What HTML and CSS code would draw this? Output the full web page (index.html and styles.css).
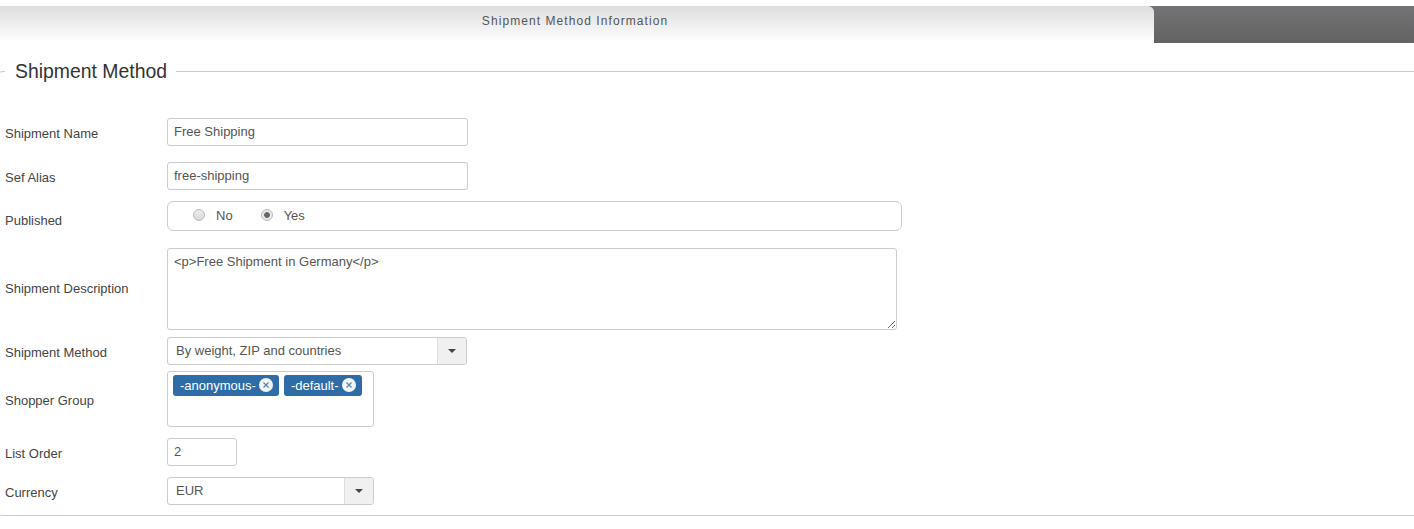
FILE: index.html
```html
<!DOCTYPE html>
<html lang="en">
<head>
<meta charset="utf-8">
<title>Shipment Method Information</title>
<link rel="stylesheet" href="styles.css">
</head>
<body>
<div class="tabbar">
  <div class="tab">Shipment Method Information</div>
</div>
<fieldset class="panel">
  <legend class="panel-title">Shipment Method</legend>
  <div class="row row-name">
    <label class="label">Shipment Name</label>
    <input class="field field-300" type="text" value="Free Shipping">
  </div>
  <div class="row row-alias">
    <label class="label">Sef Alias</label>
    <input class="field field-300" type="text" value="free-shipping">
  </div>
  <div class="row row-published">
    <label class="label label-low">Published</label>
    <div class="radios">
      <span class="radio"></span><span class="radio-text">No</span>
      <span class="radio radio-on"></span><span class="radio-text">Yes</span>
    </div>
  </div>
  <div class="row row-desc">
    <label class="label label-high">Shipment Description</label>
    <textarea class="area">&lt;p&gt;Free Shipment in Germany&lt;/p&gt;</textarea>
  </div>
  <div class="row row-method">
    <label class="label">Shipment Method</label>
    <div class="select select-300">
      <span class="select-value">By weight, ZIP and countries</span>
      <span class="select-toggle"><span class="caret"></span></span>
    </div>
  </div>
  <div class="row row-group">
    <label class="label">Shopper Group</label>
    <div class="tags">
      <span class="tag">-anonymous-<svg class="tag-x" viewBox="0 0 14 14"><circle cx="7" cy="7" r="7" fill="#f2f5f8"/><path d="M4.5 4.5l5 5M9.5 4.5l-5 5" stroke="#5f86ab" stroke-width="1.3" fill="none"/></svg></span>
      <span class="tag">-default-<svg class="tag-x" viewBox="0 0 14 14"><circle cx="7" cy="7" r="7" fill="#f2f5f8"/><path d="M4.5 4.5l5 5M9.5 4.5l-5 5" stroke="#5f86ab" stroke-width="1.3" fill="none"/></svg></span>
    </div>
  </div>
  <div class="row row-order">
    <label class="label">List Order</label>
    <input class="field field-70" type="text" value="2">
  </div>
  <div class="row row-currency">
    <label class="label">Currency</label>
    <div class="select select-207">
      <span class="select-value">EUR</span>
      <span class="select-toggle"><span class="caret"></span></span>
    </div>
  </div>
</fieldset>
</body>
</html>
```

FILE: styles.css
```css
* { box-sizing: border-box; }
html, body { margin: 0; padding: 0; height: 529px; overflow: hidden; background: #fff; }
body {
  padding-top: 6px;
  font-family: "Liberation Sans", Arial, sans-serif;
  font-size: 13px;
  color: #333;
}
.tabbar {
  height: 37px;
  background: linear-gradient(#747477, #626262);
}
.tab {
  width: 1154px;
  height: 36px;
  padding-top: 8px;
  padding-right: 4px;
  border-top-right-radius: 6px;
  background: linear-gradient(#dedede, #f6f6f6 75%, #fff);
  box-shadow: 0 1px 0 #fff;
  text-align: center;
  font-size: 12px;
  letter-spacing: 1.07px;
  color: #555;
}
.panel {
  margin: 14px -10px 0 -5px;
  padding: 0 0 9px 9px;
  height: 459px;
  border: 1px solid #ccc;
  border-radius: 8px;
  min-width: 0;
}
.panel-title {
  margin-left: 0;
  padding: 0 9px 0 10px;
  font-size: 19.4px;
  line-height: 28px;
  color: #333;
}
.row { display: flex; align-items: center; }
.label { width: 162px; padding-top: 2px; font-size: 13px; color: #444; }
.label-low { padding-top: 9px; }
.label-high { padding-top: 0; margin-top: -2px; }
.row-name { margin-top: 33px; }
.row-alias { margin-top: 16px; }
.row-published { margin-top: 11px; }
.row-desc { margin-top: 17px; }
.row-method { margin-top: 7px; }
.row-group { margin-top: 6px; }
.row-order { margin-top: 11px; }
.row-currency { margin-top: 11px; }
.field, .area, .select, .tags, .radios {
  border: 1px solid #ccc;
  border-radius: 3px;
  background: #fff;
  font-family: inherit;
  font-size: 13px;
  color: #555;
}
.field { height: 28px; padding: 0 6px 2px; outline: none; }
.field-300 { width: 301px; }
.field-70 { width: 70px; }
.radios {
  display: flex;
  align-items: center;
  width: 735px;
  height: 30px;
  padding: 0 0 2px 25px;
  border-radius: 6px;
}
.radio {
  width: 12px;
  height: 12px;
  border: 1px solid #bbb;
  border-radius: 50%;
  background: linear-gradient(#eee, #d8d8d8);
}
.radio-on { background: radial-gradient(circle, #666 0 2.5px, #e8e8e8 3.2px); margin-left: 28px; }
.radio-text { margin-left: 11px; }
.area {
  display: block;
  width: 730px;
  height: 82px;
  padding: 5px 6px;
  outline: none;
}
.select { display: flex; height: 28px; }
.select-300 { width: 300px; }
.select-207 { width: 207px; }
.select-value { flex: 1; padding: 5px 8px; }
.select-toggle {
  display: flex;
  align-items: center;
  justify-content: center;
  width: 29px;
  border-left: 1px solid #ddd;
  background: #f0f0f0;
  border-radius: 0 3px 3px 0;
}
.caret {
  width: 0;
  height: 0;
  border-top: 4px solid #444;
  border-left: 4px solid transparent;
  border-right: 4px solid transparent;
}
.tags {
  display: flex;
  align-items: flex-start;
  gap: 5px;
  width: 207px;
  height: 56px;
  padding: 3px 5px;
}
.tag {
  display: flex;
  align-items: center;
  height: 21px;
  padding: 0 6px 0 7px;
  border-radius: 3px;
  background: #2d6ca6;
  color: #fff;
  font-size: 13px;
}
.tag-x { width: 14px; height: 14px; margin-left: 3px; margin-top: -2px; }
```
